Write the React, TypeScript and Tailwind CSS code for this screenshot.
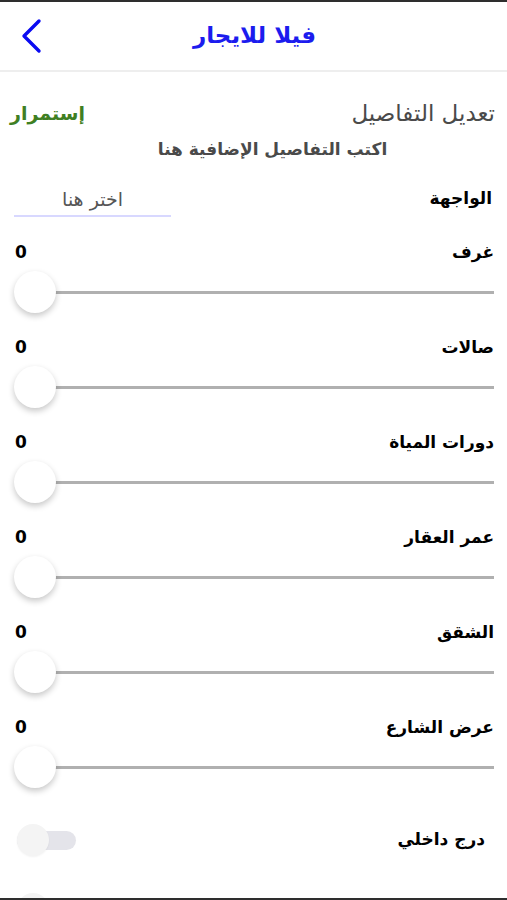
import * as React from "react";

const sliders = ["غرف", "صالات", "دورات المياة", "عمر العقار", "الشقق", "عرض الشارع"];

const SliderRow = ({ label }: { label: string }) => {
  return (
    <div className="flex flex-col pl-[14px] pr-[13px] h-[95px]">
      <div className="flex items-center justify-between h-[24px]">
        <span className="text-[17px] font-bold text-black">{label}</span>
        <span className="text-[17px] font-bold text-black pl-[1px]" dir="ltr">
          0
        </span>
      </div>
      <div className="flex items-center h-[44px] mt-[5px]" dir="ltr">
        <div className="w-[42px] h-[42px] rounded-full bg-white shadow-[0_3px_6px_rgba(0,0,0,0.22)] shrink-0 z-10" />
        <div className="flex-1 h-[3px] bg-[#b0b0b0] -ml-[2px]" />
      </div>
    </div>
  );
};

const SwitchRow = ({ label, className }: { label?: string; className?: string }) => {
  return (
    <div
      className={`flex items-center justify-between h-[58px] pr-[22px] pl-[17px] shrink-0 ${className ?? ""}`}
    >
      <span className="text-[17px] font-bold text-black">{label}</span>
      <div className="relative w-[59px] h-[32px] flex items-center" dir="ltr">
        <div className="w-full h-[19px] rounded-full bg-[#e4e4ea]" />
        <div className="absolute left-0 top-0 w-[32px] h-[32px] rounded-full bg-[#f4f4f4] shadow-[0_1px_2px_rgba(0,0,0,0.05)]" />
      </div>
    </div>
  );
};

const App = () => {
  return (
    <main
      dir="rtl"
      className="w-[507px] h-[900px] overflow-hidden bg-white flex flex-col font-['DejaVu_Sans',sans-serif]"
    >
      <div className="h-[2px] bg-[#2e2e2e] shrink-0" />

      <header className="relative h-[70px] shrink-0 flex items-center justify-center border-b-2 border-[#eeeeee]">
        <h1 className="text-[23px] font-bold text-[#1c1cee] -mt-[1px] pl-[2px]">فيلا للايجار</h1>
        <svg
          className="absolute left-[20px] top-[16px]"
          width="24"
          height="36"
          viewBox="0 0 24 36"
          fill="none"
        >
          <path
            d="M19 3 L4 18 L19 33"
            stroke="#0b0bf2"
            strokeWidth="3.4"
            strokeLinecap="round"
            strokeLinejoin="round"
          />
        </svg>
      </header>

      <div className="flex-1 overflow-hidden flex flex-col">
        <section className="flex items-center justify-between h-[28px] mt-[27px] pr-[12px] pl-[10px] shrink-0">
          <h2 className="text-[23px] text-[#4a4a4a]">تعديل التفاصيل</h2>
          <button className="text-[19px] font-bold text-[#3f7f23]">إستمرار</button>
        </section>

        <p className="h-[26px] mt-[10px] text-center text-[17px] font-bold text-[#4a4a4a] shrink-0 pl-[38px]">
          اكتب التفاصيل الإضافية هنا
        </p>

        <div className="flex items-center justify-between h-[36px] mt-[18px] pr-[15px] pl-[14px] shrink-0">
          <span className="text-[17px] font-bold text-black">الواجهة</span>
          <div className="w-[157px] h-[36px] flex items-center justify-center border-b-2 border-[#d8d8ff] text-[19px] text-[#555555] pt-[2px]">
            اختر هنا
          </div>
        </div>

        <div className="mt-[24px] flex flex-col shrink-0">
          {sliders.map((s) => (
            <SliderRow key={s} label={s} />
          ))}
        </div>

        <SwitchRow label="درج داخلي" />
        <SwitchRow className="mt-[11px]" />
      </div>

      <div className="h-[2px] bg-[#2e2e2e] shrink-0" />
    </main>
  );
};

export default App;
